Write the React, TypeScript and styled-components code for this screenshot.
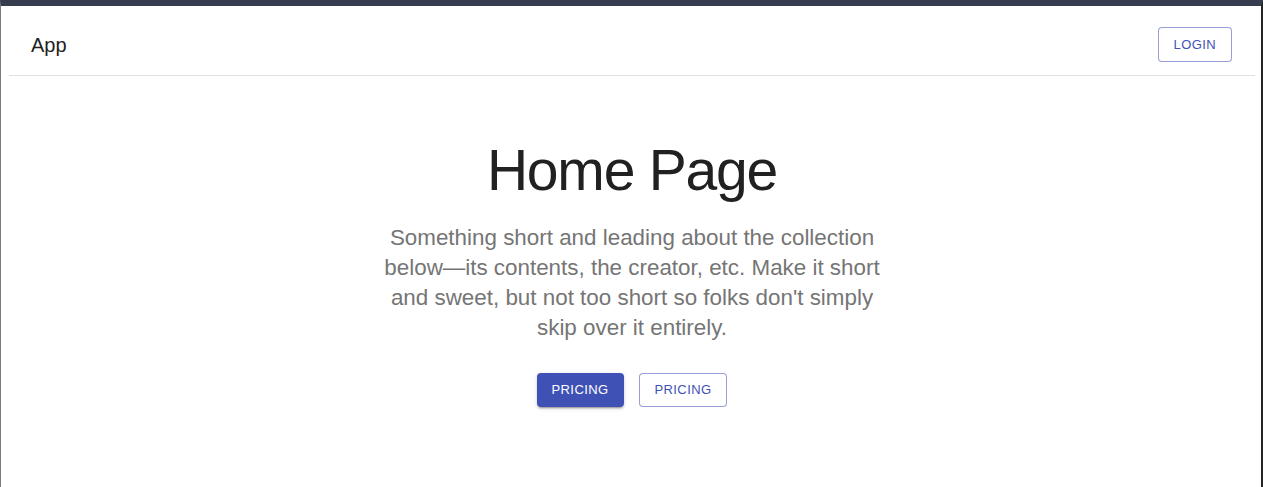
import React from "react";
import styled, { createGlobalStyle } from "styled-components";

const Global = createGlobalStyle`
  html, body { margin: 0; padding: 0; background: #ffffff; }
  body { font-family: "Liberation Sans", Arial, sans-serif; }
  * { box-sizing: border-box; }
`;

const Frame = styled.div`
  height: 487px;
  overflow: hidden;
  border-top: 6px solid #353d4f;
  border-left: 1px solid #7b7b7b;
  border-right: 2px solid #242424;
  background: #ffffff;
  padding: 8px 6px 0 8px;
`;

const Header = styled.header`
  height: 62px;
  display: flex;
  align-items: center;
  justify-content: space-between;
  padding: 0 23px 0 22px;
  border-bottom: 1px solid #e0e0e0;
`;

const Brand = styled.div`
  font-size: 20px;
  color: #1f1f1f;
  line-height: 1;
`;

const Button = styled.button<{ $variant: "contained" | "outlined" }>`
  font-family: "Liberation Sans", Arial, sans-serif;
  font-size: 13px;
  letter-spacing: 0.4px;
  text-transform: uppercase;
  line-height: 22px;
  border-radius: 4px;
  cursor: pointer;
  padding: ${(p) => (p.$variant === "contained" ? "6px 15px" : "5px 15px")};
  color: ${(p) => (p.$variant === "contained" ? "#ffffff" : "#3f51b5")};
  background: ${(p) => (p.$variant === "contained" ? "#3f51b5" : "#ffffff")};
  border: ${(p) => (p.$variant === "contained" ? "none" : "1px solid rgba(63, 81, 181, 0.55)")};
  box-shadow: ${(p) =>
    p.$variant === "contained"
      ? "0 3px 1px -2px rgba(0,0,0,0.2), 0 2px 2px 0 rgba(0,0,0,0.14), 0 1px 5px 0 rgba(0,0,0,0.12)"
      : "none"};
`;

const LoginButton = styled(Button)`
  line-height: 23px;
  padding: 5px 15px;
`;

const Hero = styled.main`
  display: flex;
  flex-direction: column;
  align-items: center;
  padding-top: 58px;
`;

const Title = styled.h1`
  margin: 0;
  font-size: 57px;
  font-weight: 400;
  line-height: 72px;
  color: #212121;
  letter-spacing: -1.2px;
`;

const Lead = styled.p`
  margin: 17px 0 0;
  width: 505px;
  text-align: center;
  font-size: 22.4px;
  line-height: 30px;
  color: #757575;
`;

const Actions = styled.div`
  display: flex;
  gap: 15px;
  margin-top: 30px;
`;

export default function App() {
  return (
    <>
      <Global />
      <Frame>
        <Header>
          <Brand>App</Brand>
          <LoginButton $variant="outlined">Login</LoginButton>
        </Header>
        <Hero>
          <Title>Home Page</Title>
          <Lead>
            Something short and leading about the collection below—its contents, the creator, etc. Make it
            short and sweet, but not too short so folks don't simply skip over it entirely.
          </Lead>
          <Actions>
            <Button $variant="contained">Pricing</Button>
            <Button $variant="outlined">Pricing</Button>
          </Actions>
        </Hero>
      </Frame>
    </>
  );
}
